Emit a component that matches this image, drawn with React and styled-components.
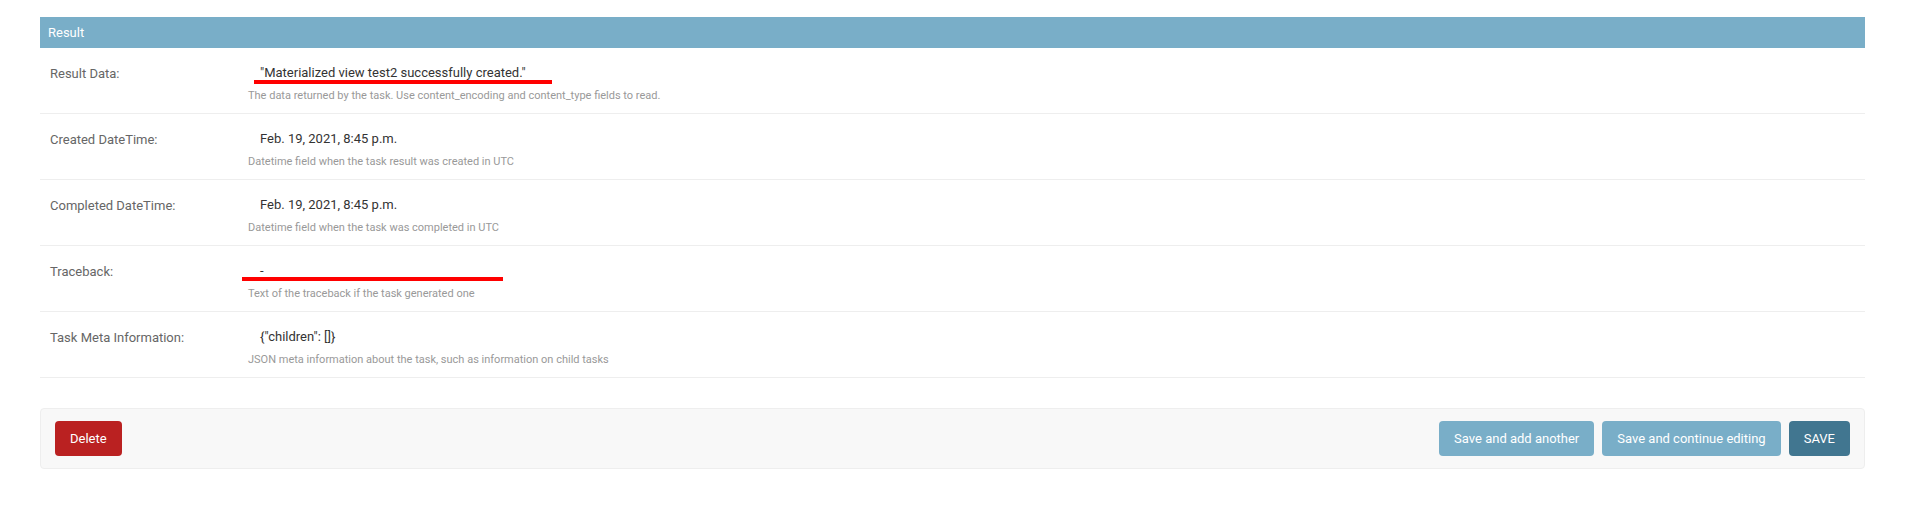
import React from 'react';
import styled, { createGlobalStyle } from 'styled-components';

const GlobalStyle = createGlobalStyle`
    body {
        margin: 0;
        background: #fff;
        font-family: Roboto, "Liberation Sans", sans-serif;
        color: #333;
    }
`;

const Page = styled.div`
    padding: 17px 40px;
`;

const Fieldset = styled.fieldset`
    margin: 0;
    padding: 0;
    border: none;
    min-width: 0;
`;

/* 파란 섹션 헤더 */
const Title = styled.h2`
    margin: 0;
    padding: 8px;
    background: #79aec8;
    color: #fff;
    font-size: 13px;
    line-height: 15px;
    font-weight: 400;
`;

const FormRow = styled.div`
    display: grid;
    grid-template-columns: 198px 1fr;
    padding: 10px 10px 10px;
    border-bottom: 1px solid #eee;
    font-size: 13px;
`;

const Label = styled.div`
    padding-top: 8px;
    line-height: 16px;
    color: #666;
`;

const Field = styled.div`
    display: flex;
    flex-direction: column;
`;

/* 읽기 전용 값, mark가 있으면 빨간 밑줄 표시 */
const Value = styled.div`
    position: relative;
    padding: 7px 0 0 12px;
    line-height: 16px;
    color: #333;
    &::after {
        content: '';
        display: ${(p) => (p.$mark ? 'block' : 'none')};
        position: absolute;
        left: ${(p) => (p.$mark ? p.$mark.left : 0)}px;
        top: ${(p) => (p.$mark ? p.$mark.top : 0)}px;
        width: ${(p) => (p.$mark ? p.$mark.width : 0)}px;
        height: 4px;
        background: #ff0000;
    }
`;

const Help = styled.div`
    margin-top: 8px;
    font-size: 11px;
    line-height: 14px;
    color: #999;
`;

const SubmitRow = styled.div`
    display: flex;
    align-items: center;
    gap: 8px;
    margin-top: 30px;
    padding: 12px 14px;
    background: #f8f8f8;
    border: 1px solid #eee;
    border-radius: 4px;
`;

const COLORS = {
    danger: '#ba2121',
    primary: '#417690',
    secondary: '#79aec8',
};

const Button = styled.button`
    height: 35px;
    padding: 10px 15px;
    border: none;
    border-radius: 4px;
    background: ${(p) => COLORS[p.$variant]};
    color: #fff;
    font-family: inherit;
    font-size: 13px;
    line-height: 15px;
    cursor: pointer;
    &:first-child {
        margin-right: auto;
    }
`;

const rows = [
    {
        label: 'Result Data:',
        value: '"Materialized view test2 successfully created."',
        help: 'The data returned by the task. Use content_encoding and content_type fields to read.',
        mark: { left: 6, top: 22, width: 298 },
    },
    {
        label: 'Created DateTime:',
        value: 'Feb. 19, 2021, 8:45 p.m.',
        help: 'Datetime field when the task result was created in UTC',
    },
    {
        label: 'Completed DateTime:',
        value: 'Feb. 19, 2021, 8:45 p.m.',
        help: 'Datetime field when the task was completed in UTC',
    },
    {
        label: 'Traceback:',
        value: '-',
        help: 'Text of the traceback if the task generated one',
        mark: { left: -6, top: 21, width: 261 },
    },
    {
        label: 'Task Meta Information:',
        value: '{"children": []}',
        help: 'JSON meta information about the task, such as information on child tasks',
    },
];

const App = () => {
    return (
        <>
            <GlobalStyle />
            <Page>
                <Fieldset>
                    <Title>Result</Title>
                    {rows.map((row) => (
                        <FormRow key={row.label}>
                            <Label>{row.label}</Label>
                            <Field>
                                <Value $mark={row.mark}>{row.value}</Value>
                                <Help>{row.help}</Help>
                            </Field>
                        </FormRow>
                    ))}
                </Fieldset>
                <SubmitRow>
                    <Button $variant="danger">Delete</Button>
                    <Button $variant="secondary">Save and add another</Button>
                    <Button $variant="secondary">Save and continue editing</Button>
                    <Button $variant="primary">SAVE</Button>
                </SubmitRow>
            </Page>
        </>
    );
};

export default App;
